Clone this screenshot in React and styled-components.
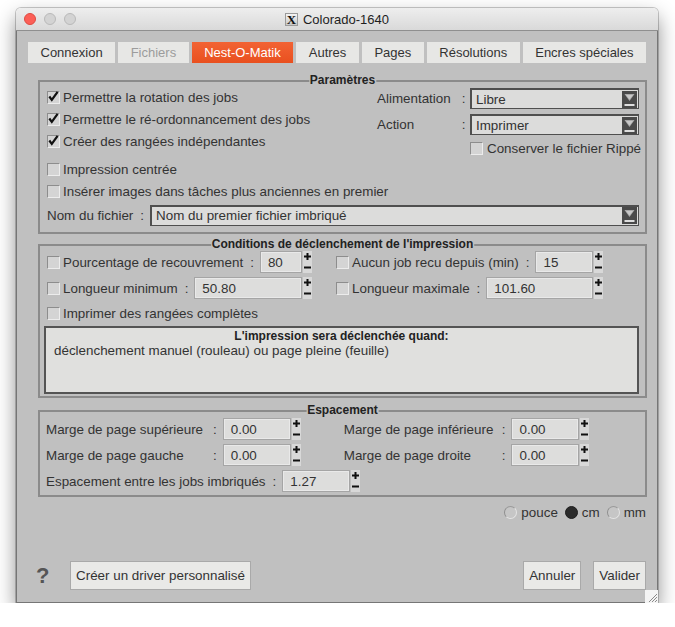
import React from "react";
import styled, { createGlobalStyle } from "styled-components";

const GlobalStyle = createGlobalStyle`
  html, body {
    margin: 0;
    padding: 0;
    background: #ffffff;
  }
  body {
    font-family: "Liberation Sans", Arial, sans-serif;
    font-size: 13.4px;
    color: #333333;
  }
`;

const BG = "#c0c0c0";

const tabs = [
  { label: "Connexion" },
  { label: "Fichiers", disabled: true },
  { label: "Nest-O-Matik", active: true },
  { label: "Autres" },
  { label: "Pages" },
  { label: "Résolutions" },
  { label: "Encres spéciales" },
];

// small drawings used by the form controls
function CheckMark() {
  return (
    <svg width="13" height="13" viewBox="0 0 13 13">
      <path d="M2.5 6.5 L5.2 10.2 L11.5 1.5" fill="none" stroke="#111" strokeWidth="2.4" />
    </svg>
  );
}

function Checkbox({ checked }) {
  return <Box>{checked && <CheckMark />}</Box>;
}

function Spin() {
  return (
    <SpinCol>
      <svg width="9" height="11" viewBox="0 0 9 11">
        <path d="M4.5 2 V9 M1 5.5 H8" stroke="#111" strokeWidth="2" />
      </svg>
      <svg width="9" height="11" viewBox="0 0 9 11">
        <path d="M1 5.5 H8" stroke="#111" strokeWidth="2" />
      </svg>
    </SpinCol>
  );
}

function SpinField({ value }) {
  return (
    <SpinWrap>
      <SpinInput>{value}</SpinInput>
      <Spin />
    </SpinWrap>
  );
}

function Select({ value }) {
  return (
    <SelectBox>
      <span>{value}</span>
      <SelectArrow>
        <svg width="13" height="17" viewBox="0 0 13 17">
          <path d="M1.5 3 H11.5 L6.5 10 Z" fill="#a8a8a8" />
          <path d="M3 4 H10 L6.5 8.5 Z" fill="#c8c8c8" />
          <rect x="1.5" y="13" width="10" height="2" fill="#dedede" />
        </svg>
      </SelectArrow>
    </SelectBox>
  );
}

function CondField({ label, value }) {
  return (
    <CondRow>
      <Checkbox />
      <span>{label}</span>
      <Colon>:</Colon>
      <SpinField value={value} />
    </CondRow>
  );
}

function MarginField({ label, labelWidth, value }) {
  return (
    <MarginPair>
      <MarginLabel $w={labelWidth}>{label}</MarginLabel>
      <Colon>:</Colon>
      <SpinField value={value} />
    </MarginPair>
  );
}

export default function App() {
  return (
    <>
      <GlobalStyle />
      <Window>
        <TitleBar>
          <Lights>
            <Light $color="#fc5f57" $border="#de4a41" />
            <Light $color="#d3d3d3" $border="#b9b9b9" />
            <Light $color="#d3d3d3" $border="#b9b9b9" />
          </Lights>
          <Title>
            <XIcon>X</XIcon>
            Colorado-1640
          </Title>
          <span />
        </TitleBar>

        <Body>
          <TabBar>
            {tabs.map((t) => (
              <Tab key={t.label} $active={t.active} $disabled={t.disabled}>
                {t.label}
              </Tab>
            ))}
          </TabBar>

          <Group $top={17} $pad="4px 6px 6px 7px">
            <GroupTitle>Paramètres</GroupTitle>
            <ParamTop>
              <div>
                <CheckRow>
                  <Checkbox checked />
                  Permettre la rotation des jobs
                </CheckRow>
                <CheckRow>
                  <Checkbox checked />
                  Permettre le ré-ordonnancement des jobs
                </CheckRow>
                <CheckRow>
                  <Checkbox checked />
                  Créer des rangées indépendantes
                </CheckRow>
              </div>
              <ParamRight>
                <SelectRow>
                  <span>Alimentation</span>
                  <ColonCell>:</ColonCell>
                  <Select value="Libre" />
                </SelectRow>
                <SelectRow>
                  <span>Action</span>
                  <ColonCell>:</ColonCell>
                  <Select value="Imprimer" />
                </SelectRow>
                <KeepRow>
                  <Checkbox />
                  Conserver le fichier Rippé
                </KeepRow>
              </ParamRight>
            </ParamTop>
            <CheckRow $gap={2}>
              <Checkbox />
              Impression centrée
            </CheckRow>
            <CheckRow>
              <Checkbox />
              Insérer images dans tâches plus anciennes en premier
            </CheckRow>
            <FileRow>
              <span>Nom du fichier</span>
              <Colon>:</Colon>
              <Select value="Nom du premier fichier imbriqué" />
            </FileRow>
          </Group>

          <Group $top={10} $pad="4px 6px 2px 7px">
            <GroupTitle>Conditions de déclenchement de l'impression</GroupTitle>
            <CondGrid>
              <CondField label="Pourcentage de recouvrement" value="80" />
              <CondField label="Aucun job recu depuis (min)" value="15" />
              <CondField label="Longueur minimum" value="50.80" />
              <CondField label="Longueur maximale" value="101.60" />
              <CheckRow>
                <Checkbox />
                Imprimer des rangées complètes
              </CheckRow>
            </CondGrid>
            <InfoBox>
              <InfoTitle>L'impression sera déclenchée quand:</InfoTitle>
              déclenchement manuel (rouleau) ou page pleine (feuille)
            </InfoBox>
          </Group>

          <Group $top={12} $pad="6px 6px 3px 6px">
            <GroupTitle>Espacement</GroupTitle>
            <MarginRows>
              <MarginRow>
                <MarginField label="Marge de page supérieure" labelWidth={160} value="0.00" />
                <MarginField label="Marge de page inférieure" labelWidth={151} value="0.00" />
              </MarginRow>
              <MarginRow>
                <MarginField label="Marge de page gauche" labelWidth={160} value="0.00" />
                <MarginField label="Marge de page droite" labelWidth={151} value="0.00" />
              </MarginRow>
              <MarginRow>
                <MarginField label="Espacement entre les jobs imbriqués" value="1.27" />
              </MarginRow>
            </MarginRows>
          </Group>

          <Units>
            <Unit>
              <Radio />
              pouce
            </Unit>
            <Unit>
              <Radio $on />
              cm
            </Unit>
            <Unit>
              <Radio />
              mm
            </Unit>
          </Units>

          <Footer>
            <Help>?</Help>
            <Button>Créer un driver personnalisé</Button>
            <Actions>
              <Button>Annuler</Button>
              <Button>Valider</Button>
            </Actions>
          </Footer>
        </Body>

        <Grip>
          <svg width="13" height="13" viewBox="0 0 13 13">
            <path d="M4 12 L12 4 M7 12 L12 7 M10 12 L12 10" stroke="#8a8a8a" strokeWidth="1" />
          </svg>
        </Grip>
      </Window>
    </>
  );
}

const Window = styled.div`
  position: relative;
  margin: 8px 0 0 16px;
  width: 642px;
  height: 595px;
  display: flex;
  flex-direction: column;
  border-radius: 5px 5px 0 0;
  box-shadow: 0 9px 20px rgba(0, 0, 0, 0.45), 0 0 0 1px rgba(0, 0, 0, 0.2);
`;

const TitleBar = styled.div`
  height: 22px;
  display: grid;
  grid-template-columns: 1fr auto 1fr;
  align-items: center;
  background: linear-gradient(#eeeeee, #d9d9d9);
  border-bottom: 1px solid #8f8f8f;
  border-radius: 5px 5px 0 0;
`;

const Lights = styled.div`
  display: flex;
  gap: 8px;
  padding-left: 8px;
`;

const Light = styled.span`
  width: 12px;
  height: 12px;
  border-radius: 50%;
  box-sizing: border-box;
  background: ${(p) => p.$color};
  border: 1px solid ${(p) => p.$border};
`;

const Title = styled.div`
  display: flex;
  align-items: center;
  gap: 5px;
  font-family: "Liberation Sans", Arial, sans-serif;
  font-size: 13px;
  color: #1e1e1e;
`;

const XIcon = styled.span`
  width: 13px;
  height: 13px;
  box-sizing: border-box;
  border: 1px solid #9a9a9a;
  background: linear-gradient(#f4f4f4, #c8c8c8);
  font-family: "Liberation Serif", serif;
  font-weight: bold;
  font-size: 13px;
  line-height: 12px;
  text-align: center;
  color: #111;
`;

const Body = styled.div`
  flex: 1;
  display: flex;
  flex-direction: column;
  background: ${BG};
  border: 1px solid #767676;
  border-top: none;
  padding: 0 10px 12px 11px;
`;

const TabBar = styled.div`
  display: flex;
  gap: 3px;
  margin-top: 11px;
  margin-right: 1px;
`;

const Tab = styled.div`
  flex: 1 1 auto;
  height: 21px;
  display: flex;
  align-items: center;
  justify-content: center;
  padding: 0 10px;
  background: ${(p) => (p.$active ? "linear-gradient(#f26334, #e9501f)" : "#e7e7e5")};
  color: ${(p) => (p.$active ? "#ffffff" : p.$disabled ? "#9c9c9c" : "#333333")};
  font-size: 13px;
  white-space: nowrap;
`;

const Group = styled.div`
  position: relative;
  margin: ${(p) => p.$top}px 0 0 10px;
  border: 2px solid #8b8b8b;
  padding: ${(p) => p.$pad};
`;

const GroupTitle = styled.div`
  position: absolute;
  top: -9px;
  left: 50%;
  transform: translateX(-50%);
  background: ${BG};
  padding: 0 1px;
  font-size: 12px;
  font-weight: bold;
  line-height: 14px;
  color: #222;
  white-space: nowrap;
`;

const Box = styled.span`
  width: 13px;
  height: 13px;
  flex: none;
  box-sizing: border-box;
  display: inline-flex;
  border: 1px solid;
  border-color: #8d8d8d #ececec #ececec #8d8d8d;
  background: #d4d4d4;
  overflow: visible;
  svg {
    margin: -2px 0 0 -1px;
  }
`;

const CheckRow = styled.div`
  display: flex;
  align-items: center;
  gap: 3px;
  height: 22px;
  margin-top: ${(p) => p.$gap || 0}px;
  white-space: nowrap;
`;

const ParamTop = styled.div`
  display: flex;
  justify-content: space-between;
`;

const ParamRight = styled.div`
  width: 262px;
  margin-top: 2px;
  display: flex;
  flex-direction: column;
  gap: 5px;
`;

const SelectRow = styled.div`
  display: grid;
  grid-template-columns: 80px 13px 1fr;
  align-items: center;
`;

const ColonCell = styled.span`
  text-align: center;
`;

const Colon = styled.span`
  margin: 0 6px 0 7px;
`;

const KeepRow = styled.div`
  display: flex;
  align-items: center;
  gap: 4px;
  height: 16px;
  padding-left: 93px;
  white-space: nowrap;
`;

const SelectBox = styled.div`
  flex: 1;
  height: 21px;
  box-sizing: border-box;
  display: flex;
  align-items: center;
  border: 1px solid #4f4f4f;
  border-top-width: 2px;
  border-left-width: 2px;
  background: #dcdcdb;
  padding-left: 4px;
  color: #333;
`;

const SelectArrow = styled.span`
  margin: 0 1px 0 auto;
  width: 15px;
  height: 17px;
  display: flex;
  align-items: center;
  justify-content: center;
  background: #4a4a4a;
`;

const FileRow = styled.div`
  display: flex;
  align-items: center;
  height: 22px;
  margin-top: 2px;
`;

const SpinWrap = styled.div`
  flex: 1;
  display: flex;
  align-items: stretch;
  height: 22px;
`;

const SpinInput = styled.div`
  flex: 1;
  box-sizing: border-box;
  display: flex;
  align-items: center;
  padding-left: 7px;
  border: 1px solid #a5a5a5;
  box-shadow: inset 0 0 0 1px #e9e9e9;
  background: #dddddc;
  color: #333;
`;

const SpinCol = styled.div`
  width: 9px;
  margin-left: 1px;
  display: flex;
  flex-direction: column;
  background: #d8d8d8;
`;

const CondGrid = styled.div`
  display: grid;
  grid-template-columns: 265px 267px;
  column-gap: 24px;
  row-gap: 2px;
`;

const CondRow = styled.div`
  display: flex;
  align-items: center;
  height: 24px;
  white-space: nowrap;
  > span:nth-child(2) {
    margin-left: 3px;
  }
`;

const InfoBox = styled.div`
  margin: 2px 0 0 -3px;
  height: 68px;
  box-sizing: border-box;
  border: 2px solid #545454;
  background: #e0e0de;
  padding: 1px 8px;
  line-height: 15px;
  color: #333;
`;

const InfoTitle = styled.div`
  text-align: center;
  font-size: 12px;
  font-weight: bold;
  line-height: 14px;
  color: #222;
`;

const MarginRows = styled.div`
  display: flex;
  flex-direction: column;
  gap: 4px;
`;

const MarginRow = styled.div`
  display: flex;
  gap: 43px;
`;

const MarginPair = styled.div`
  display: flex;
  align-items: center;
  height: 22px;
  white-space: nowrap;
  ${SpinWrap} {
    flex: none;
    width: 78px;
  }
`;

const MarginLabel = styled.span`
  width: ${(p) => (p.$w ? `${p.$w}px` : "auto")};
`;

const Units = styled.div`
  display: flex;
  justify-content: flex-end;
  align-items: center;
  gap: 7px;
  height: 16px;
  margin: 7px 1px 0 0;
`;

const Unit = styled.div`
  display: flex;
  align-items: center;
  gap: 4px;
`;

const Radio = styled.span`
  width: 13px;
  height: 13px;
  box-sizing: border-box;
  border-radius: 50%;
  background: ${(p) => (p.$on ? "#2b2b2b" : "#c6c6c6")};
  border: 1px solid ${(p) => (p.$on ? "#1e1e1e" : "#e4e4e4")};
  border-left-color: ${(p) => (p.$on ? "#1e1e1e" : "#8e8e8e")};
  border-top-color: ${(p) => (p.$on ? "#1e1e1e" : "#9a9a9a")};
`;

const Footer = styled.div`
  margin-top: auto;
  display: flex;
  align-items: center;
`;

const Help = styled.span`
  width: 42px;
  padding-left: 8px;
  box-sizing: border-box;
  font-size: 22px;
  font-weight: bold;
  color: #555;
`;

const Button = styled.button`
  height: 29px;
  padding: 0 5px;
  background: #e9e9e7;
  border: 1px solid #a9a9a9;
  font-family: "Liberation Sans", Arial, sans-serif;
  font-size: 13.4px;
  color: #333;
`;

const Actions = styled.div`
  margin: 0 1px 0 auto;
  display: flex;
  gap: 12px;
`;

const Grip = styled.div`
  position: absolute;
  right: 0;
  bottom: 0;
  width: 13px;
  height: 13px;
  background: #f4f4f4;
`;
